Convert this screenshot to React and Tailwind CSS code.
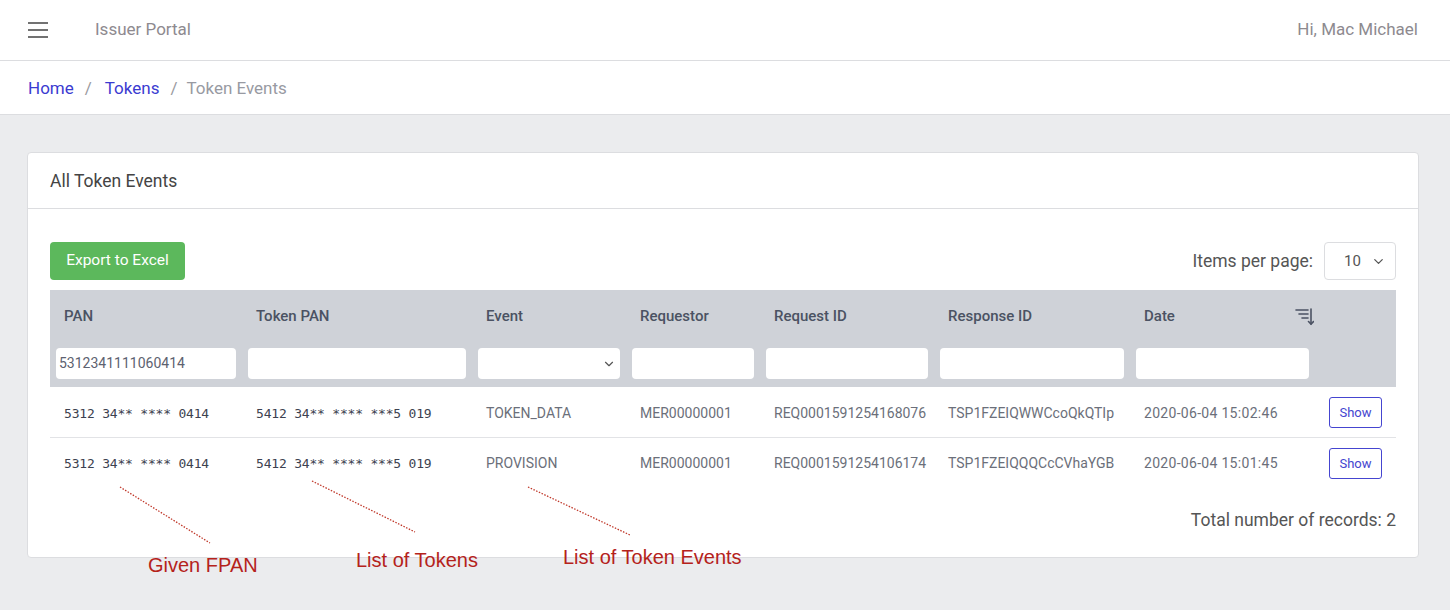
import { ChevronDown } from "lucide-react";

const rows = [
  {
    pan: "5312 34** **** 0414",
    token: "5412 34** **** ***5 019",
    event: "TOKEN_DATA",
    requestor: "MER00000001",
    requestId: "REQ0001591254168076",
    responseId: "TSP1FZEIQWWCcoQkQTIp",
    date: "2020-06-04 15:02:46",
  },
  {
    pan: "5312 34** **** 0414",
    token: "5412 34** **** ***5 019",
    event: "PROVISION",
    requestor: "MER00000001",
    requestId: "REQ0001591254106174",
    responseId: "TSP1FZEIQQQCcCVhaYGB",
    date: "2020-06-04 15:01:45",
  },
];

const columns = ["PAN", "Token PAN", "Event", "Requestor", "Request ID", "Response ID"];

const SortIcon = () => (
  <svg width="20" height="20" viewBox="0 0 20 20" fill="none" stroke="#4b5263" strokeWidth="1.6" strokeLinecap="round">
    <line x1="2" y1="4" x2="14" y2="4" />
    <line x1="5" y1="8" x2="14" y2="8" />
    <line x1="8" y1="12" x2="14" y2="12" />
    <line x1="17" y1="3" x2="17" y2="18" />
    <polyline points="14.5,15.5 17,18 19.5,15.5" />
  </svg>
);

const Note = ({ className, children }) => (
  <div className={`absolute text-[20px] leading-none text-[#b5221b] font-['Liberation_Sans',Arial,sans-serif] ${className}`}>
    {children}
  </div>
);

const mono = "pl-[14px] pt-[3px] font-['DejaVu_Sans_Mono',monospace] text-[13px] text-[#3d4250] tracking-[-0.2px]";
const cell = "pl-[14px] pt-[3px] text-[14px] text-[#6b6f7a]";

export default function App() {
  return (
    <div className="relative w-[1450px] h-[610px] overflow-hidden bg-[#ebecee] font-['Roboto',sans-serif]">
      {/* Top bar */}
      <header className="h-[61px] bg-white border-b border-[#dcdde0] flex items-center px-[28px]">
        <div className="flex flex-col gap-[5px] w-[20px]">
          <span className="h-[2px] bg-[#727272]" />
          <span className="h-[2px] bg-[#727272]" />
          <span className="h-[2px] bg-[#727272]" />
        </div>
        <div className="ml-[47px] text-[17px] text-[#8e8a8f]">Issuer Portal</div>
        <div className="ml-auto mr-[4px] text-[17px] text-[#8e8a8f]">Hi, Mac Michael</div>
      </header>

      {/* Breadcrumb */}
      <nav className="h-[54px] bg-white border-b border-[#dcdde0] flex items-center pt-[3px] px-[28px] text-[17px]">
        <a href="#" className="text-[#3b3bd1]">Home</a>
        <span className="ml-[11px] text-[#9a9aa0]">/</span>
        <a href="#" className="ml-[13px] text-[#3b3bd1]">Tokens</a>
        <span className="ml-[11px] text-[#9a9aa0]">/</span>
        <span className="ml-[9px] text-[#989aa2]">Token Events</span>
      </nav>

      {/* Card */}
      <div className="ml-[27px] mt-[37px] w-[1392px] h-[406px] bg-white border border-[#dcdde0] rounded-[4px]">
        <div className="h-[56px] border-b border-[#dcdde0] flex items-center pt-[2px] px-[22px] text-[17.5px] text-[#444]">
          All Token Events
        </div>

        <div className="px-[22px] pt-[33px]">
          <div className="flex items-center justify-between">
            <button className="h-[38px] w-[135px] rounded-[4px] bg-[#5cb85c] text-white text-[15.5px]">
              Export to Excel
            </button>
            <div className="flex items-center gap-[11px]">
              <span className="text-[17.5px] text-[#555]">Items per page:</span>
              <div className="w-[72px] h-[38px] border border-[#dcdde0] rounded-[4px] flex items-center justify-between pl-[19px] pr-[9px] text-[15px] text-[#555]">
                10
                <ChevronDown size={15} strokeWidth={2} className="text-[#555]" />
              </div>
            </div>
          </div>

          <table className="mt-[10px] w-[1346px] table-fixed border-collapse">
            <colgroup>
              <col className="w-[192px]" />
              <col className="w-[230px]" />
              <col className="w-[154px]" />
              <col className="w-[134px]" />
              <col className="w-[174px]" />
              <col className="w-[196px]" />
              <col className="w-[185px]" />
              <col className="w-[81px]" />
            </colgroup>
            <thead className="bg-[#cfd2d8]">
              <tr className="h-[52px]">
                {columns.map((c) => (
                  <th key={c} className="text-left font-medium text-[15px] text-[#4b5263] pl-[14px] align-middle">
                    {c}
                  </th>
                ))}
                <th className="text-left font-medium text-[15px] text-[#4b5263] pl-[14px] pr-[1px]">
                  <div className="flex items-center justify-between">
                    Date
                    <SortIcon />
                  </div>
                </th>
                <th />
              </tr>
              <tr className="h-[45px]">
                <td className="px-[6px] pb-[2px]">
                  <div className="h-[31px] bg-white rounded-[4px] flex items-center pl-[3px] text-[14px] text-[#5d6270]">
                    5312341111060414
                  </div>
                </td>
                <td className="px-[6px] pb-[2px]"><div className="h-[31px] bg-white rounded-[4px]" /></td>
                <td className="px-[6px] pb-[2px]">
                  <div className="h-[31px] bg-white rounded-[4px] flex items-center justify-end pr-[4px]">
                    <ChevronDown size={14} strokeWidth={2} className="text-[#555]" />
                  </div>
                </td>
                <td className="px-[6px] pb-[2px]"><div className="h-[31px] bg-white rounded-[4px]" /></td>
                <td className="px-[6px] pb-[2px]"><div className="h-[31px] bg-white rounded-[4px]" /></td>
                <td className="px-[6px] pb-[2px]"><div className="h-[31px] bg-white rounded-[4px]" /></td>
                <td className="px-[6px] pb-[2px]"><div className="h-[31px] bg-white rounded-[4px]" /></td>
                <td />
              </tr>
            </thead>
            <tbody>
              {rows.map((r, i) => (
                <tr key={i} className={`h-[50px] ${i === 0 ? "border-b border-[#e2e3e6]" : ""}`}>
                  <td className={mono}>{r.pan}</td>
                  <td className={mono}>{r.token}</td>
                  <td className={cell}>{r.event}</td>
                  <td className={cell}>{r.requestor}</td>
                  <td className={cell}>{r.requestId}</td>
                  <td className={cell}>{r.responseId}</td>
                  <td className={`${cell} tracking-[0.3px]`}>{r.date}</td>
                  <td className="pl-[14px] pt-[2px]">
                    <button className="h-[31px] w-[53px] border border-[#4545d0] rounded-[3px] text-[13px] text-[#4545d0]">
                      Show
                    </button>
                  </td>
                </tr>
              ))}
            </tbody>
          </table>

          <div className="mt-[20px] text-right text-[17.5px] text-[#555]">Total number of records: 2</div>
        </div>
      </div>

      {/* Annotations */}
      <svg className="absolute left-0 top-0 pointer-events-none" width="1450" height="610">
        <g stroke="#c0392b" strokeWidth="1.3" strokeDasharray="1.5 1.5">
          <line x1="120" y1="487" x2="210" y2="543" />
          <line x1="312" y1="481" x2="415" y2="532" />
          <line x1="528" y1="487" x2="630" y2="535" />
        </g>
      </svg>
      <Note className="left-[148px] top-[555px]">Given FPAN</Note>
      <Note className="left-[356px] top-[550px]">List of Tokens</Note>
      <Note className="left-[563px] top-[547px]">List of Token Events</Note>
    </div>
  );
}
